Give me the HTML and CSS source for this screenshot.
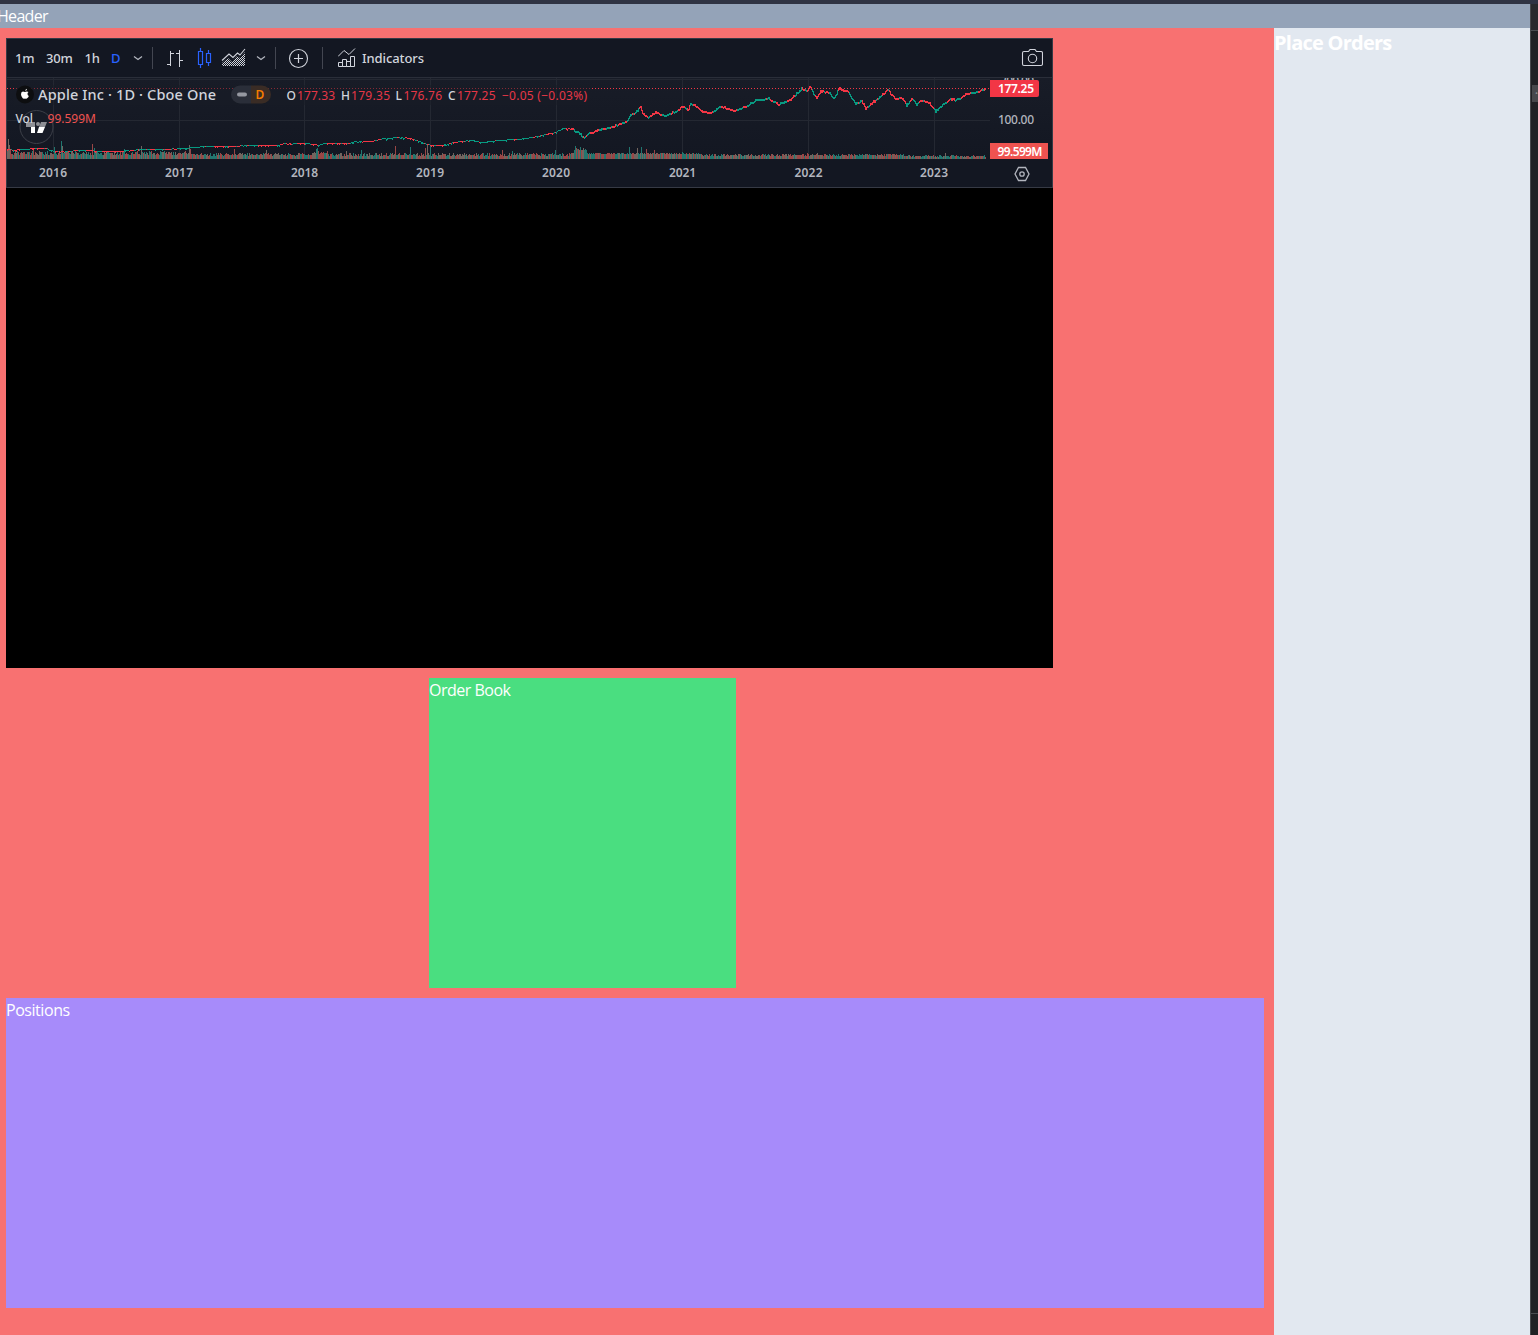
FILE: index.html
```html
<!DOCTYPE html>
<html lang="en">
<head>
<meta charset="utf-8">
<title>Trading</title>
<link rel="stylesheet" href="styles.css">
</head>
<body>
<div class="topbar"></div>
<div class="window">
  <div class="page">
    <header class="header"><span class="header-text">Header</span></header>
    <div class="content">
      <main class="main">
        <section class="chart">
          <div class="widget">
            <div class="toolbar">
              <span class="tf tf-1m">1m</span>
              <span class="tf tf-30m">30m</span>
              <span class="tf tf-1h">1h</span>
              <span class="tf tf-d">D</span>
              <svg class="tools" width="220" height="38" viewBox="127 39 220 38" fill="none">
                <path d="M134 56.5l4 3 4-3M257 56.5l4 3 4-3" stroke="#b2b5be" stroke-width="1.2"/>
                <path d="M152.500 47v22M275.500 47v22M322.500 47v22" stroke="#434651"/>
                <path d="M170.500 51v15M167 64.500h3M171 53.500h3M179.500 50v17M176 53.500h3M180 60.500h3" stroke="#d1d4dc"/>
                <path d="M198.500 51.500h4v13h-4zM200.500 48v3M200.500 65v3M206.500 53.500h4v9h-4zM208.500 50v3M208.500 63v3" stroke="#2962ff" stroke-width="1.2"/>
                <defs><pattern id="dots" width="2" height="2" patternUnits="userSpaceOnUse"><path d="M0 0h1v1H0zM1 1h1v1H1z" fill="#d1d4dc"/></pattern></defs>
                <path d="M222 66v-3l6-5 4 4 5-6 3 2 5-6v14z" fill="url(#dots)"/>
                <path d="M222 60.500l7-6.500 4 3.500 4.500-4.500 2.500 2 5-6" stroke="#d1d4dc" stroke-width="1.100"/>
                <circle cx="298.500" cy="58.500" r="9" stroke="#d1d4dc" stroke-width="1.100"/>
                <path d="M298.500 54v9M294 58.500h9" stroke="#d1d4dc" stroke-width="1.200"/>
              </svg>
              <svg class="indicator-icon" width="18" height="38" viewBox="338 39 18 38" fill="none" stroke="#d1d4dc">
                <path d="M338 56.500l6-6 5 4 6-6"/>
                <path d="M338.500 66.500v-4h4v4zM342.500 66.500v-7h4v7zM346.500 66.500v-5h4v5zM350.500 66.500v-10h4v10z"/>
              </svg>
              <span class="tf tf-ind">Indicators</span>
              <svg class="camera" width="22" height="38" viewBox="1021 39 22 38" fill="none" stroke="#d1d4dc" stroke-width="1.100">
                <path d="M1024 51.500h4.500l1.500-2h5l1.500 2h4.500a1.500 1.500 0 0 1 1.500 1.500v11a1.500 1.500 0 0 1-1.500 1.500h-17a1.500 1.500 0 0 1-1.500-1.500v-11a1.500 1.500 0 0 1 1.500-1.500z"/>
                <circle cx="1032.500" cy="58.500" r="4.200"/>
              </svg>
            </div>
            <svg class="plot" width="1045" height="109" viewBox="7 78 1045 109">
              <defs><linearGradient id="pane" x1="0" y1="0" x2="0" y2="1"><stop offset="0" stop-color="#181c27"/><stop offset="1" stop-color="#131722"/></linearGradient></defs>
              <rect x="7" y="78" width="1045" height="81" fill="url(#pane)"/>
              <path d="M7 79.500h983M7 120.500h983M53.500 78v81M179.500 78v81M304.500 78v81M430.500 78v81M556.500 78v81M682.500 78v81M808.500 78v81M934.500 78v81" stroke="#242832"/>
              <g fill="none" shape-rendering="crispEdges">
                <path id="vol-up" stroke="#22766f"/>
                <path id="vol-down" stroke="#9a4646"/>
                <path id="vol-mix" stroke="#72655f"/>
                <path id="price-up" stroke="#089981"/>
                <path id="price-down" stroke="#f23645"/>
                <path d="M7 88.500h983" stroke="#f23645" stroke-dasharray="1 2"/>
              </g>
              <rect x="14" y="85" width="576" height="20" fill="#171b26" opacity=".5"/>
              <g class="legend">
                <circle cx="25" cy="94.500" r="9" fill="#0d0e10"/>
                <path d="M25.300 91.200q0-2 1.700-2.400q0 2-1.700 2.400zM25 92q-4-1.600-4 2.200 0 2.300 1.700 4 .8.800 2.300.2 1.600.6 2.400-.3 1-.9 1.400-2.200-1.500-.8-1.300-2.200 0-1.100 1-1.600-1.300-1.200-3.500-.1z" fill="#fff"/>
                <text x="38" y="100" class="title" textLength="178">Apple Inc · 1D · Cboe One</text>
                <path d="M240 85.500h11v18h-11a9 9 0 0 1 0-18z" fill="#2a2e39"/>
                <path d="M251 85.500h11a9 9 0 0 1 0 18h-11z" fill="#3a2c25"/>
                <rect x="237" y="92.500" width="10" height="4" rx="2" fill="#9598a1"/>
                <text x="255.500" y="99" class="badge">D</text>
                <text x="286.500" y="100" textLength="10">O</text><text x="297" y="100" class="red" textLength="38">177.33</text>
                <text x="341" y="100" textLength="9.500">H</text><text x="351" y="100" class="red" textLength="39">179.35</text>
                <text x="395.500" y="100">L</text><text x="403.500" y="100" class="red" textLength="38.500">176.76</text>
                <text x="448" y="100">C</text><text x="457" y="100" class="red" textLength="38.500">177.25</text>
                <text x="502" y="100" class="red" textLength="85">−0.05 (−0.03%)</text>
              </g>
              <circle cx="36.500" cy="127" r="16.500" fill="#171b26" stroke="#3d4049"/>
              <path d="M26 122h9v5h-4.500v0H26zM41 122h6l-2 5h-6z" fill="#8d8f95"/><circle cx="38" cy="124" r="2" fill="#8d8f95"/>
              <path d="M31 127h4v6h-4zM39 127h6l-2.500 6H37z" fill="#fff"/>
              <g class="legend"><text x="15.500" y="123" textLength="17.500">Vol</text><text x="47.500" y="123" textLength="48.500" class="vol">99.599M</text></g>
              <rect x="7" y="159" width="1045" height="28" fill="#131722"/>
              <g class="axis" text-anchor="middle">
                <text x="53" y="177" textLength="28">2016</text><text x="179" y="177" textLength="28">2017</text><text x="304.500" y="177" textLength="27">2018</text><text x="430" y="177" textLength="28">2019</text><text x="556" y="177" textLength="28">2020</text><text x="682.500" y="177" textLength="27">2021</text><text x="808.500" y="177" textLength="28">2022</text><text x="934" y="177" textLength="28">2023</text>
              </g>
              <g class="price-axis">
                <text x="1000" y="84.500" textLength="34">200.00</text>
                <text x="998" y="124" textLength="36">100.00</text>
                <path d="M990 80h47a2 2 0 0 1 2 2v13a2 2 0 0 1-2 2h-47z" fill="#f23645"/>
                <text x="998" y="93" textLength="36" class="tag">177.25</text>
                <path d="M990 143h58v16h-58z" fill="#ef5350"/>
                <text x="997.500" y="156" textLength="45" class="tag">99.599M</text>
              </g>
              <path d="M1018.500 167.500h7l3.500 6.500-3.500 6.500h-7L1015 174z" fill="none" stroke="#b2b5be" stroke-width="1.300"/><circle cx="1022" cy="174" r="2.200" fill="none" stroke="#b2b5be" stroke-width="1.300"/>
            </svg>
          </div>
        </section>
        <section class="order-book"><span class="ob-text">Order Book</span></section>
        <section class="positions"><span class="pos-text">Positions</span></section>
      </main>
      <aside class="orders"><h2>Place Orders</h2></aside>
    </div>
  </div>
  <div class="side"><div class="side-head"></div><div class="side-handle">•</div><div class="side-foot"></div></div>
</div>
<script src="chart.js"></script>
</body>
</html>
```
FILE: styles.css
```css
* { box-sizing: border-box; }
body { margin: 0; height: 1335px; overflow: hidden; background: #202124; color: #fff; font: 16px/24px "Open Sans", "Noto Sans", sans-serif; }
.topbar { height: 4px; background: #2f3343; }
.window { display: flex; height: 1331px; }
.page { width: 1530px; display: flex; flex-direction: column; }
.header { height: 24px; padding-top: 1px; line-height: 23px; background: #94a3b8; }
.header-text { margin-left: -3px; letter-spacing: -.7px; }
.content { display: flex; flex: 1; }
.main { width: 1274px; padding: 10px 10px 27px 6px; background: #f87171; display: flex; flex-direction: column; gap: 10px; }
.chart { width: 1047px; height: 630px; background: #000; }
.widget { height: 150px; border: 1px solid #363a45; background: #131722; }
.toolbar { height: 39px; display: flex; align-items: center; border-bottom: 1px solid #2a2e39; padding: 0 9px 0 8px; }
.tf { font: 500 13px/38px "Noto Sans", sans-serif; color: #d1d4dc; white-space: nowrap; }
.tf-1m { width: 31px; letter-spacing: -.3px; }
.tf-30m { width: 38.500px; letter-spacing: -.2px; }
.tf-1h { width: 26.500px; letter-spacing: -.2px; }
.tf-d { width: 16px; color: #2962ff; }
.tools { flex: none; width: 220px; margin-right: -9px; }
.indicator-icon { flex: none; }
.tf-ind { margin-left: 6px; letter-spacing: -.1px; }
.camera { margin-left: auto; }
.plot { display: block; overflow: hidden; }
.plot text { font-family: "Noto Sans", sans-serif; }
.legend text { font-size: 12px; font-weight: 500; fill: #d1d4dc; }
.legend .title { font-size: 14.500px; font-weight: 500; }
.legend .red { font-weight: 400; fill: #e63747; }
.legend .vol { font-weight: 400; fill: #ef5350; }
.legend .badge { font-size: 12px; font-weight: 600; fill: #f57c00; }
.axis text { font-size: 12px; font-weight: 600; fill: #b2b5be; }
.price-axis text { font-size: 12px; font-weight: 500; fill: #b2b5be; }
.price-axis .tag { fill: #fff; font-weight: 600; }
.order-book { width: 307px; height: 310px; margin-left: 423px; background: #4ade80; }
.ob-text { letter-spacing: -.5px; }
.positions { height: 310px; background: #a78bfa; }
.pos-text { letter-spacing: -.45px; }
.orders { width: 256px; background: #e2e8f0; }
.orders h2 { margin: 0; font-size: 20px; line-height: 30px; font-weight: 700; letter-spacing: -.75px; }
.side { width: 8px; border-left: 1px solid #46484b; background: #202124; display: flex; flex-direction: column; }
.side-head { height: 27px; background: #292a2d; border-bottom: 1px solid #4a4c50; }
.side-handle { margin: 54px 0 0 1px; width: 6px; height: 17px; background: #47484b; color: #8b8c8f; font-size: 8px; line-height: 16px; text-align: right; }
.side-foot { margin-top: auto; height: 22px; border-top: 1px solid #4a4c50; }
```
FILE: chart.js
```js
// Price keyframes: x, y in plot coordinates.
const price = [7,149,15,150,33,148,45,148,52,151,62,151.5,80,150,100,151,122,151,140,149,165,149,185,148,195,147,210,146,225,146.5,250,145,275,145,285,143.5,305,143,318,145,325,143,345,143.500,355,141.500,370,141.500,380,139,395,137.500,410,138,420,142,430,145.500,445,144.500,455,142,470,140,480,142,500,140,520,139,535,136.500,545,134,555,132,562,128.500,572,129,578,132,583,137,590,132,600,129,610,127,626,121,630,114,636,111,640,106,642,113,647,117,655,112,665,115,675,111,682,106,687,110,690,103,697,107,703,112,712,112,720,106,733,110,745,106,755,100,768,98,778,104,790,99,796,93,801,88,805,90,809,87,816,97,820,91,828,92,833,98,839,88,848,92,855,103,861,101,865,108,872,102,880,96,887,90,894,98,902,98,906,105,912,98,916,105,920,100,928,101,935,111,943,104,950,99,958,99,965,94,975,91,986,88];
// Tall volume bars: x, height.
const spikes = {8:20, 9:14, 10:10, 33:11, 54:12, 61:18, 62:13, 92:15, 94:11, 124:10, 141:13, 189:14, 190:10, 234:10, 266:9, 316:10, 317:11, 346:8, 361:9, 395:13, 410:12, 425:11, 427:15, 430:13, 502:9, 512:8, 555:9, 575:13, 576:11, 580:12, 583:11, 629:12, 637:11, 641:12, 646:10, 654:9, 682:7, 807:6, 817:6, 945:6};
let seed = 7919;
const rnd = () => (seed = (seed * 16807) % 2147483647) / 2147483647;
const out = {pu: '', pd: '', vu: '', vd: '', vm: ''};
let k = 0, up = false, last = 149;
for (let x = 7; x < 986; x++) {
  while (price[k + 2] < x) k += 2;
  const t = (x - price[k]) / (price[k + 2] - price[k]);
  const y = price[k + 1] + t * (price[k + 3] - price[k + 1]);
  const wild = x > 795 ? 2.4 : x > 570 ? 1.8 : 0.7;
  const slope = price[k + 3] - price[k + 1];
  if (rnd() < 0.45) up = rnd() < (slope < 0 ? 0.62 : 0.38);
  const now = Math.round(y + (rnd() - .5) * wild);
  const top = Math.min(now, last);
  const h = Math.max(1, Math.abs(now - last)) + (x > 570 ? 1 : rnd() < .15 ? 1 : 0);
  last = now;
  out[up ? 'pu' : 'pd'] += `M${x + .5} ${top}v${h}`;
  const base = x < 190 ? 4 : x < 570 ? 3 : x < 700 ? 4.5 : x < 780 ? 3 : x < 910 ? 3 : 2;
  let v = base + rnd() * (x < 190 ? 4 : x < 570 ? 3 : 2);
  if (x > 573 && x < 587) v += 4;
  if (x > 312 && x < 328) v += 2;
  v = spikes[x] || Math.round(v);
  const r = rnd();
  out[r < .36 ? 'vu' : r < .7 ? 'vd' : 'vm'] += `M${x + .5} ${159 - v}v${v}`;
}
const set = (id, d) => document.getElementById(id).setAttribute('d', d);
set('price-up', out.pu);
set('price-down', out.pd);
set('vol-up', out.vu);
set('vol-down', out.vd);
set('vol-mix', out.vm);
```
